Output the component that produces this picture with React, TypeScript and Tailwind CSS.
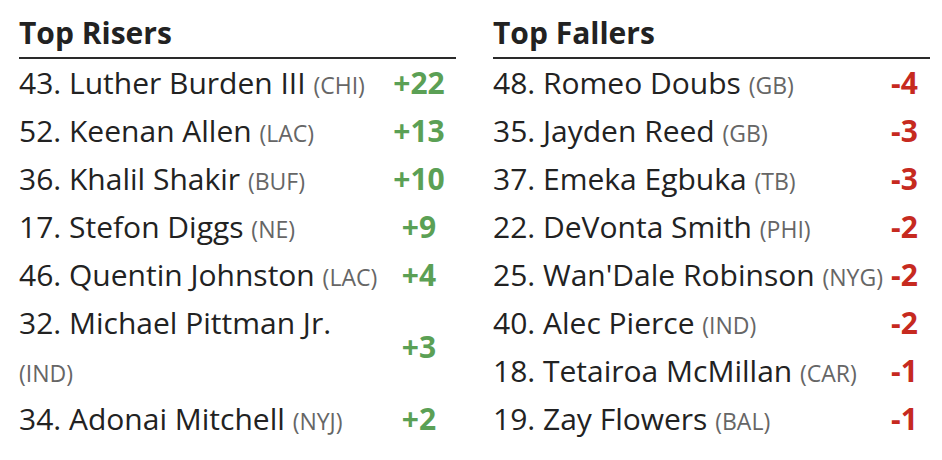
import React from 'react';

type Row = { rank: number; name: string; team: string; delta: string };

const risers: Row[] = [
  { rank: 43, name: 'Luther Burden III', team: 'CHI', delta: '+22' },
  { rank: 52, name: 'Keenan Allen', team: 'LAC', delta: '+13' },
  { rank: 36, name: 'Khalil Shakir', team: 'BUF', delta: '+10' },
  { rank: 17, name: 'Stefon Diggs', team: 'NE', delta: '+9' },
  { rank: 46, name: 'Quentin Johnston', team: 'LAC', delta: '+4' },
  { rank: 32, name: 'Michael Pittman Jr.', team: 'IND', delta: '+3' },
  { rank: 34, name: 'Adonai Mitchell', team: 'NYJ', delta: '+2' },
];

const fallers: Row[] = [
  { rank: 48, name: 'Romeo Doubs', team: 'GB', delta: '-4' },
  { rank: 35, name: 'Jayden Reed', team: 'GB', delta: '-3' },
  { rank: 37, name: 'Emeka Egbuka', team: 'TB', delta: '-3' },
  { rank: 22, name: 'DeVonta Smith', team: 'PHI', delta: '-2' },
  { rank: 25, name: "Wan'Dale Robinson", team: 'NYG', delta: '-2' },
  { rank: 40, name: 'Alec Pierce', team: 'IND', delta: '-2' },
  { rank: 18, name: 'Tetairoa McMillan', team: 'CAR', delta: '-1' },
  { rank: 19, name: 'Zay Flowers', team: 'BAL', delta: '-1' },
];

const MoverList: React.FC<{ title: string; rows: Row[]; up: boolean }> = ({ title, rows, up }) => (
  <div className="w-[437px]">
    <h2 className="font-bold text-[30px] leading-[38px] text-[#222] pb-[5px] border-b-2 border-[#2a2a2a]">
      {title}
    </h2>
    <div className={up ? 'grid grid-cols-[1fr_74px]' : 'grid grid-cols-[1fr_47px]'}>
      {rows.map((r) => (
        <React.Fragment key={r.rank}>
          <div className="text-[30px] leading-[48px] text-[#222]">
            {r.rank}. {r.name} <span className="text-[23px] leading-none text-[#666]">({r.team})</span>
          </div>
          <div
            className={`flex items-center justify-center text-[30px] font-bold leading-[48px] ${
              up ? 'text-[#5ba055]' : 'text-[#c62a1f] pr-[4px]'
            }`}
          >
            {r.delta}
          </div>
        </React.Fragment>
      ))}
    </div>
  </div>
);

export default function App() {
  return (
    <div
      className="w-[942px] h-[460px] bg-white flex gap-[37px] pl-[19px] pt-[14px]"
      style={{ fontFamily: '"Open Sans", sans-serif' }}
    >
      <MoverList title="Top Risers" rows={risers} up />
      <MoverList title="Top Fallers" rows={fallers} up={false} />
    </div>
  );
}
